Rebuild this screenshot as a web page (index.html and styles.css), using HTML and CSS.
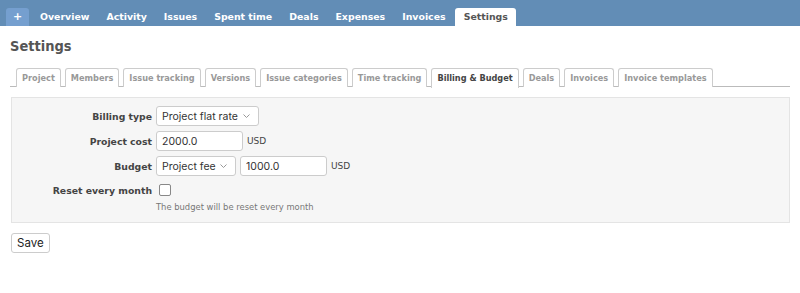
FILE: index.html
```html
<!DOCTYPE html>
<html lang="en">
<head>
  <meta charset="UTF-8" />
  <title>Settings</title>
  <link rel="stylesheet" href="styles.css">
</head>
<body>
  <div id="main-menu">
    <a class="new-object" href="#">+</a>
    <a href="#">Overview</a>
    <a href="#">Activity</a>
    <a href="#">Issues</a>
    <a href="#">Spent time</a>
    <a href="#">Deals</a>
    <a href="#">Expenses</a>
    <a href="#">Invoices</a>
    <a class="selected" href="#">Settings</a>
  </div>

  <div id="content">
    <h2>Settings</h2>

    <div class="tabs">
      <a href="#">Project</a>
      <a href="#">Members</a>
      <a href="#">Issue tracking</a>
      <a href="#">Versions</a>
      <a href="#">Issue categories</a>
      <a href="#">Time tracking</a>
      <a class="selected" href="#">Billing &amp; Budget</a>
      <a href="#">Deals</a>
      <a href="#">Invoices</a>
      <a href="#">Invoice templates</a>
    </div>

    <!-- billing settings -->
    <div class="box tabular">
      <label>Billing type</label>
      <div class="field">
        <select class="billing-type"><option>Project flat rate</option></select>
      </div>

      <label>Project cost</label>
      <div class="field">
        <input type="text" value="2000.0"> <span class="currency">USD</span>
      </div>

      <label>Budget</label>
      <div class="field">
        <select class="budget-type"><option>Project fee</option></select>
        <input type="text" value="1000.0"> <span class="currency">USD</span>
      </div>

      <label>Reset every month</label>
      <div class="field">
        <input type="checkbox">
      </div>

      <span></span>
      <em class="info">The budget will be reset every month</em>
    </div>

    <button class="save">Save</button>
  </div>
</body>
</html>
```

FILE: styles.css
```css
body {
  margin: 0;
  font-family: Verdana, "DejaVu Sans", sans-serif;
  font-size: 12px;
  color: #333;
  background: #fff;
}
#main-menu {
  background-color: #628db6;
  height: 26px;
  padding: 8px 0 0 6px;
  box-sizing: border-box;
  display: flex;
}
#main-menu a {
  color: #fff;
  font-weight: bold;
  font-size: 9.4px;
  line-height: 18px;
  padding: 0 8px 0 9px;
  text-decoration: none;
  border-radius: 3px 3px 0 0;
}
#main-menu a.new-object {
  background-color: #759fcf;
  font-size: 11px;
  width: 23px;
  padding: 0;
  text-align: center;
  margin-right: 2px;
}
#main-menu a.selected {
  background-color: #fff;
  color: #555;
  margin-left: 1px;
}
#content {
  padding: 0 10px;
}
h2 {
  font-family: "DejaVu Sans Condensed", "DejaVu Sans", sans-serif;
  font-size: 14.5px;
  color: #555;
  margin: 11px 0 13px;
  line-height: 18px;
}
.tabs {
  display: flex;
  gap: 4px;
  padding-left: 6px;
  border-bottom: 1px solid #bbb;
  height: 18px;
}
.tabs a {
  font-size: 8.2px;
  font-weight: bold;
  color: #999;
  text-decoration: none;
  background: #fff;
  border: 1px solid #ccc;
  border-bottom: none;
  border-radius: 3px 3px 0 0;
  padding: 0 5px;
  line-height: 18px;
  height: 18px;
}
.tabs a.selected {
  color: #444;
  height: 19px;
  position: relative;
  z-index: 1;
}
.box {
  margin: 10px 0 0 1px;
  background: #f6f6f6;
  border: 1px solid #e4e4e4;
  padding: 8px 0 10px;
}
.tabular {
  display: grid;
  grid-template-columns: 140px 1fr;
  column-gap: 4px;
  row-gap: 5px;
  align-items: center;
}
.tabular label {
  text-align: right;
  font-weight: bold;
  font-size: 9.3px;
  color: #444;
}
.field {
  display: flex;
  align-items: center;
  gap: 4px;
}
select, input[type="text"] {
  font-family: Inter, "Liberation Sans", sans-serif;
  font-size: 10.5px;
  height: 20px;
  box-sizing: border-box;
  border: 1px solid #ccc;
  border-radius: 3px;
  background: #fff;
  color: #333;
  padding: 0 5px;
}
select {
  appearance: none;
  padding-right: 16px;
  background-image: url("data:image/svg+xml,%3Csvg xmlns='http://www.w3.org/2000/svg' width='7' height='4'%3E%3Cpath d='M0.5 0.5 L3.5 3.5 L6.5 0.5' fill='none' stroke='%23999' stroke-width='1'/%3E%3C/svg%3E");
  background-repeat: no-repeat;
  background-position: right 8px center;
}
.billing-type { width: 103px; }
.budget-type { width: 80px; }
input[type="text"] { width: 87px; }
.currency {
  font-size: 9px;
  color: #444;
}
input[type="checkbox"] {
  appearance: none;
  width: 12px;
  height: 12px;
  margin: 3px 0 3px 3px;
  border: 1px solid #888;
  border-radius: 2px;
  background: #fff;
}
.info {
  font-style: normal;
  font-size: 8.4px;
  color: #777;
  margin-top: -2px;
}
button.save {
  margin: 10px 0 0 1px;
  font-family: Inter, "Liberation Sans", sans-serif;
  font-size: 11.5px;
  height: 20px;
  padding: 0 5px;
  background: #fff;
  border: 1px solid #ccc;
  border-radius: 3px;
  color: #222;
}
```
